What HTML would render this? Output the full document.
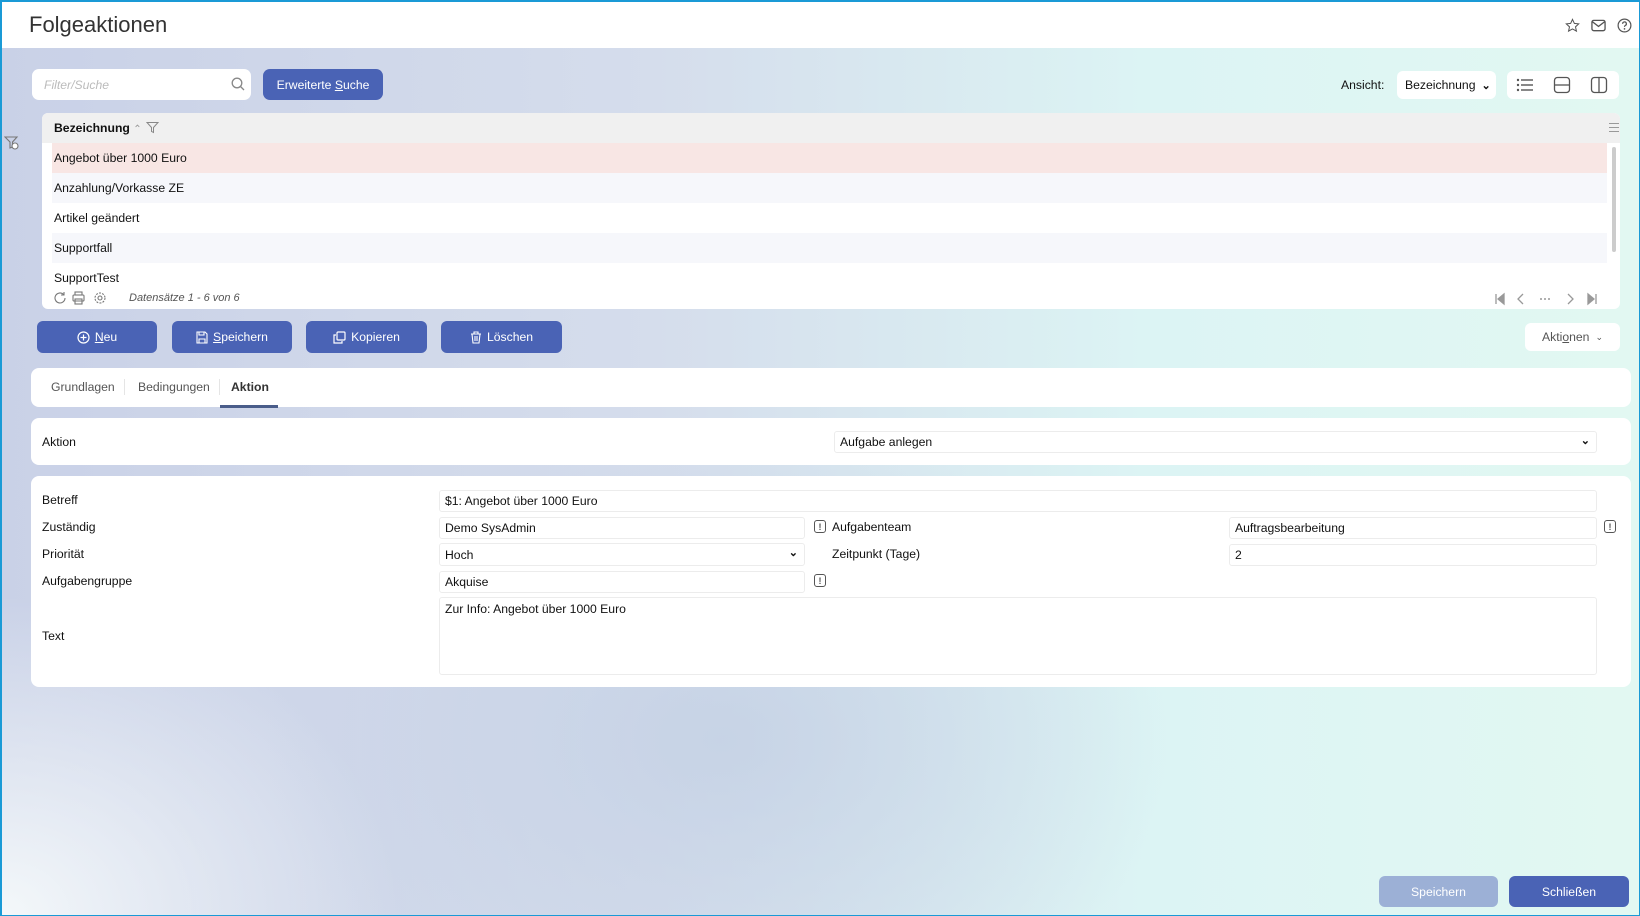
<!DOCTYPE html>
<html><head><meta charset="utf-8"><style>
*{box-sizing:border-box;margin:0;padding:0}
body{width:1640px;height:916px;overflow:hidden;font-family:"Liberation Sans",Arial,sans-serif;font-size:12.2px;color:#111;position:relative;
background:radial-gradient(ellipse 650px 450px at 720px 740px,rgba(195,208,228,.8),rgba(195,208,228,0) 70%),radial-gradient(ellipse 500px 400px at 0px 916px,#f4f8fa,rgba(244,248,250,0) 80%),linear-gradient(90deg,#c9d1e7 0%,#d5ddec 40%,#dcf4f4 70%,#e2f8f2 100%);}
.frame{position:absolute;inset:0;border:2px solid #1a9ad6;border-right-width:1px;border-bottom-width:1px;pointer-events:none;z-index:10}
.top{position:absolute;left:0;top:0;width:1640px;height:48px;background:#fff}
.title{position:absolute;left:29px;top:12px;font-size:22px;color:#333}
.abs{position:absolute}
.card{position:absolute;background:#fff;border-radius:8px}
.btn{position:absolute;background:#4a63b5;color:#fff;border-radius:6px;display:flex;align-items:center;justify-content:center;font-size:12.2px}
.btn svg{margin-right:5px}
.inp{position:absolute;background:#fff;border:1px solid #ececec;border-radius:3px;padding-left:5px;display:flex;align-items:center}
.lbl{position:absolute}
.ic{position:absolute;width:12px;height:13px;border:1.3px solid #555;border-radius:3px;font-size:9px;display:flex;align-items:center;justify-content:center;color:#555;font-weight:bold}
.row{position:absolute;left:52px;width:1555px;height:30px;padding-left:2px;display:flex;align-items:center}
</style></head><body>
<div class="top"><div class="title">Folgeaktionen</div>
<svg class="abs" style="left:1565px;top:18px" width="15" height="15" viewBox="0 0 16 16"><path d="M8 1.5l2 4.3 4.6.5-3.4 3.1 1 4.6L8 11.7 3.8 14l1-4.6L1.4 6.3 6 5.8z" fill="none" stroke="#555" stroke-width="1.1"/></svg>
<svg class="abs" style="left:1591px;top:19px" width="15" height="13" viewBox="0 0 16 13"><rect x="1" y="1" width="14" height="11" rx="2" fill="none" stroke="#555" stroke-width="1.4"/><path d="M1.5 2.5L8 7.5l6.5-5" fill="none" stroke="#555" stroke-width="1.4"/></svg>
<svg class="abs" style="left:1617px;top:18px" width="15" height="15" viewBox="0 0 16 16"><circle cx="8" cy="8" r="6.8" fill="none" stroke="#555" stroke-width="1.3"/><path d="M6 6.2a2 2 0 1 1 2.8 1.8c-.6.3-.8.7-.8 1.4" fill="none" stroke="#555" stroke-width="1.3"/><circle cx="8" cy="11.6" r=".9" fill="#555"/></svg>
</div>

<div class="inp" style="left:32px;top:69px;width:219px;height:31px;border-radius:7px;border:none;padding-left:12px;color:#bbb;font-style:italic">Filter/Suche
<svg class="abs" style="left:199px;top:8px" width="14" height="14" viewBox="0 0 14 14"><circle cx="6" cy="6" r="4.8" fill="none" stroke="#888" stroke-width="1.3"/><path d="M9.5 9.5l3.5 3.5" stroke="#888" stroke-width="1.3"/></svg></div>
<div class="btn" style="left:263px;top:69px;width:120px;height:31px;border-radius:7px"><span>Erweiterte <u>S</u>uche</span></div>

<div class="lbl" style="left:1341px;top:78px">Ansicht:</div>
<div class="inp" style="left:1397px;top:71px;width:99px;height:28px;border:none;border-radius:6px;padding-left:8px">Bezeichnung <span style="margin-left:6px;font-size:11px;font-weight:bold">&#8964;</span></div>
<div class="card" style="left:1507px;top:71px;width:112px;height:28px;border-radius:6px"></div>
<svg class="abs" style="left:1516px;top:77px" width="18" height="16" viewBox="0 0 18 16"><g fill="#555"><circle cx="2" cy="3" r="1.2"/><circle cx="2" cy="8" r="1.2"/><circle cx="2" cy="13" r="1.2"/><rect x="5" y="2.3" width="12" height="1.4"/><rect x="5" y="7.3" width="12" height="1.4"/><rect x="5" y="12.3" width="12" height="1.4"/></g></svg>
<svg class="abs" style="left:1553px;top:76px" width="18" height="18" viewBox="0 0 18 18"><rect x="1.5" y="1.5" width="15" height="15" rx="3" fill="none" stroke="#555" stroke-width="1.3"/><path d="M1.5 9h15" stroke="#555" stroke-width="1.3"/></svg>
<svg class="abs" style="left:1590px;top:76px" width="18" height="18" viewBox="0 0 18 18"><rect x="1.5" y="1.5" width="15" height="15" rx="3" fill="none" stroke="#555" stroke-width="1.3"/><path d="M9 1.5v15" stroke="#555" stroke-width="1.3"/></svg>

<svg class="abs" style="left:4px;top:135px" width="16" height="16" viewBox="0 0 16 16"><path d="M1 2h12l-4.5 5v5L6 13V7z" fill="none" stroke="#777" stroke-width="1.1"/><circle cx="11" cy="11" r="3" fill="#fff" stroke="#777" stroke-width="1.1"/></svg>

<div class="card" style="left:42px;top:113px;width:1578px;height:196px;border-radius:6px;overflow:hidden">
<div class="abs" style="left:0;top:0;width:1578px;height:30px;background:#f0f0f0"></div>
<div class="abs" style="left:12px;top:8px;font-weight:bold">Bezeichnung <span style="font-weight:normal;color:#999;font-size:10px">&#8963;</span></div>
<svg class="abs" style="left:104px;top:8px" width="13" height="13" viewBox="0 0 13 13"><path d="M1 1.5h11L7.5 6.5v5l-2-1v-4z" fill="none" stroke="#888" stroke-width="1"/></svg>
<div class="abs" style="left:1567px;top:10px;width:10px;height:9px;border-top:1px solid #999;border-bottom:1px solid #999"><div style="margin-top:3px;border-top:1px solid #999"></div></div>
<div class="abs" style="left:1570px;top:34px;width:4px;height:105px;background:#ccc;border-radius:2px"></div>
</div>
<div class="row" style="top:143px;background:#f8e6e4">Angebot über 1000 Euro</div>
<div class="row" style="top:173px;background:#f6f7fb">Anzahlung/Vorkasse ZE</div>
<div class="row" style="top:203px">Artikel geändert</div>
<div class="row" style="top:233px;background:#f6f7fb">Supportfall</div>
<div class="row" style="top:263px;width:1540px">SupportTest</div>
<svg class="abs" style="left:54px;top:291px" width="56" height="14" viewBox="0 0 56 14"><g fill="none" stroke="#777" stroke-width="1.1"><path d="M11 7a5 5 0 1 1-1.5-3.6M10 1v3h-3"/><rect x="21" y="1" width="7" height="3"/><rect x="19" y="4" width="11" height="6" rx="1"/><rect x="21" y="8" width="7" height="5"/><circle cx="46" cy="7" r="2"/><circle cx="46" cy="7" r="5" stroke-dasharray="2 1.2"/></g></svg>
<div class="abs" style="left:129px;top:292px;font-size:11px;font-style:italic;color:#555">Datensätze 1 - 6 von 6</div>
<svg class="abs" style="left:1494px;top:292px" width="110" height="14" viewBox="0 0 110 14"><g fill="none" stroke="#999" stroke-width="1.3"><path d="M2 2v10M10 2L4 7l6 5z" fill="#999"/><path d="M29 2l-5 5 5 5"/><path d="M74 2l5 5-5 5"/><path d="M102 2v10M94 2l6 5-6 5z" fill="#999"/></g><g fill="#999"><circle cx="47" cy="7" r="1"/><circle cx="51" cy="7" r="1"/><circle cx="55" cy="7" r="1"/></g></svg>

<div class="btn" style="left:37px;top:321px;width:120px;height:32px"><svg width="13" height="13" viewBox="0 0 13 13"><circle cx="6.5" cy="6.5" r="5.5" fill="none" stroke="#fff" stroke-width="1.2"/><path d="M6.5 3.5v6M3.5 6.5h6" stroke="#fff" stroke-width="1.2"/></svg><span><u>N</u>eu</span></div>
<div class="btn" style="left:172px;top:321px;width:120px;height:32px"><svg width="12" height="13" viewBox="0 0 12 13"><path d="M1 1h8l2 2v9H1z M3 1v3h5V1 M3 12V8h6v4" fill="none" stroke="#fff" stroke-width="1.1"/></svg><span><u>S</u>peichern</span></div>
<div class="btn" style="left:306px;top:321px;width:121px;height:32px"><svg width="13" height="13" viewBox="0 0 13 13"><rect x="4" y="1" width="8" height="8" rx="1" fill="none" stroke="#fff" stroke-width="1.2"/><path d="M3 4H1v8h8v-2" fill="none" stroke="#fff" stroke-width="1.2"/></svg><span>Kopieren</span></div>
<div class="btn" style="left:441px;top:321px;width:121px;height:32px"><svg width="12" height="13" viewBox="0 0 12 13"><path d="M1 3h10M4 3V1h4v2M2 3l1 9h6l1-9M5 5v5M7 5v5" fill="none" stroke="#fff" stroke-width="1.1"/></svg><span>Löschen</span></div>
<div class="card" style="left:1525px;top:323px;width:95px;height:28px;border-radius:6px;display:flex;align-items:center;justify-content:center;color:#555"><span>Akti<u>o</u>nen</span><span style="font-size:9px;margin-left:6px">&#8964;</span></div>

<div class="card" style="left:31px;top:368px;width:1600px;height:39px"></div>
<div class="lbl" style="left:51px;top:380px;color:#555">Grundlagen</div>
<div class="abs" style="left:124px;top:379px;width:1px;height:16px;background:#e5e5e5"></div>
<div class="lbl" style="left:138px;top:380px;color:#555">Bedingungen</div>
<div class="abs" style="left:219px;top:379px;width:1px;height:16px;background:#e5e5e5"></div>
<div class="lbl" style="left:231px;top:380px;color:#333;font-weight:bold">Aktion</div>
<div class="abs" style="left:220px;top:405px;width:58px;height:3px;background:#4a5d8a"></div>

<div class="card" style="left:31px;top:418px;width:1600px;height:47px"></div>
<div class="lbl" style="left:42px;top:435px">Aktion</div>
<div class="inp" style="left:834px;top:431px;width:763px;height:22px">Aufgabe anlegen<span style="position:absolute;right:6px;top:2px;font-size:11px;font-weight:bold">&#8964;</span></div>

<div class="card" style="left:31px;top:476px;width:1600px;height:211px"></div>
<div class="lbl" style="left:42px;top:493px">Betreff</div>
<div class="inp" style="left:439px;top:490px;width:1158px;height:22px">$1: Angebot über 1000 Euro</div>
<div class="lbl" style="left:42px;top:520px">Zuständig</div>
<div class="inp" style="left:439px;top:517px;width:366px;height:22px">Demo SysAdmin</div>
<div class="ic" style="left:814px;top:520px">!</div>
<div class="lbl" style="left:832px;top:520px">Aufgabenteam</div>
<div class="inp" style="left:1229px;top:517px;width:368px;height:22px">Auftragsbearbeitung</div>
<div class="ic" style="left:1604px;top:520px">!</div>
<div class="lbl" style="left:42px;top:547px">Priorität</div>
<div class="inp" style="left:439px;top:543px;width:366px;height:23px">Hoch<span style="position:absolute;right:6px;top:2px;font-size:11px;font-weight:bold">&#8964;</span></div>
<div class="lbl" style="left:832px;top:547px">Zeitpunkt (Tage)</div>
<div class="inp" style="left:1229px;top:544px;width:368px;height:22px">2</div>
<div class="lbl" style="left:42px;top:574px">Aufgabengruppe</div>
<div class="inp" style="left:439px;top:571px;width:366px;height:22px">Akquise</div>
<div class="ic" style="left:814px;top:574px">!</div>
<div class="lbl" style="left:42px;top:629px">Text</div>
<div class="inp" style="left:439px;top:597px;width:1158px;height:78px;align-items:flex-start;padding-top:4px">Zur Info: Angebot über 1000 Euro</div>

<div class="btn" style="left:1379px;top:876px;width:119px;height:31px;background:#9cb0d6">Speichern</div>
<div class="btn" style="left:1509px;top:876px;width:120px;height:31px">Schließen</div>
<div class="frame"></div>
</body></html>
